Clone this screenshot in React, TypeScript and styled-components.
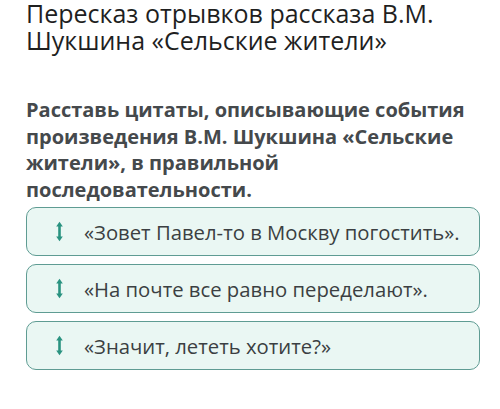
import styled, { createGlobalStyle } from "styled-components";

const GlobalStyle = createGlobalStyle`
    html, body {
        margin: 0;
        padding: 0;
        background: #ffffff;
    }
`

const Page = styled.div`
    width: 500px;
    height: 409px;
    box-sizing: border-box;
    padding: 0 20px 0 26px;
    font-family: "Open Sans", "Noto Sans", sans-serif;
    display: flex;
    flex-direction: column;
    overflow: hidden;
`

const Title = styled.h1`
    margin: 0;
    font-size: 25px;
    line-height: 27px;
    font-weight: 400;
    color: #1f1f1f;
`

const Question = styled.p`
    margin: 43px 0 4px;
    font-size: 20px;
    line-height: 26.5px;
    font-weight: 700;
    color: #45494c;
`

const List = styled.div`
    display: flex;
    flex-direction: column;
    gap: 8px;
`

const Item = styled.div`
    height: 49px;
    box-sizing: border-box;
    display: flex;
    align-items: center;
    gap: 21px;
    padding-left: 29px;
    border: 1.5px solid #5f9c93;
    border-radius: 10px;
    background: #eaf7f3;
    color: #3b3f42;
    font-size: 20.3px;
`

const Handle = styled.svg`
    width: 7px;
    height: 21px;
    flex-shrink: 0;
`

// vertical double-arrow drag handle
function SortIcon() {
    return (
        <Handle viewBox="0 0 7 21">
            <path d="M3.5 3v15" stroke="#2a9380" strokeWidth="2.6" />
            <path d="M0.2 5.5L3.5 0.8l3.3 4.7z" fill="#2a9380" />
            <path d="M0.2 15.5L3.5 20.2l3.3-4.7z" fill="#2a9380" />
        </Handle>
    )
}

const quotes = [
    "«Зовет Павел-то в Москву погостить».",
    "«На почте все равно переделают».",
    "«Значит, лететь хотите?»",
]

export default function App() {
    return (
        <>
            <GlobalStyle />
            <Page>
                <Title>Пересказ отрывков рассказа В.М. Шукшина «Сельские жители»</Title>
                <Question>
                    Расставь цитаты, описывающие события произведения В.М. Шукшина «Сельские
                    жители», в правильной последовательности.
                </Question>
                <List>
                    {quotes.map((q) => (
                        <Item key={q}>
                            <SortIcon />
                            <span>{q}</span>
                        </Item>
                    ))}
                </List>
            </Page>
        </>
    )
}
